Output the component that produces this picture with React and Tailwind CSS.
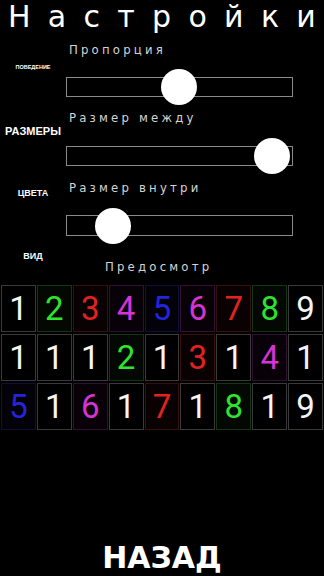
const GREEN = "#2fe32f"
const RED = "#e22222"
const MAGENTA = "#d633d6"
const BLUE = "#2424dc"
const WHITE = "#f4f4f4"

const cellStyles = {
  w: { color: WHITE, border: "border-[#3a3a3a]", bg: "bg-black" },
  g: { color: GREEN, border: "border-[#153415]", bg: "bg-[#030803]" },
  r: { color: RED, border: "border-[#361010]", bg: "bg-[#0a0202]" },
  m: { color: MAGENTA, border: "border-[#321032]", bg: "bg-[#080208]" },
  b: { color: BLUE, border: "border-[#101036]", bg: "bg-[#020208]" },
}

const rows = [
  [["1", "w"], ["2", "g"], ["3", "r"], ["4", "m"], ["5", "b"], ["6", "m"], ["7", "r"], ["8", "g"], ["9", "w"]],
  [["1", "w"], ["1", "w"], ["1", "w"], ["2", "g"], ["1", "w"], ["3", "r"], ["1", "w"], ["4", "m"], ["1", "w"]],
  [["5", "b"], ["1", "w"], ["6", "m"], ["1", "w"], ["7", "r"], ["1", "w"], ["8", "g"], ["1", "w"], ["9", "w"]],
]

const Slider = ({ thumbLeft, className }) => (
  <div className={`relative h-[20px] w-[227px] border border-[#8a8a8a] ${className}`}>
    <div
      className="absolute top-1/2 -translate-y-1/2 w-[36px] h-[36px] rounded-full bg-white"
      style={{ left: thumbLeft }}
    />
  </div>
)

const Label = ({ children, className }) => (
  <div
    className={`text-[13px] leading-[16px] tracking-[3.2px] text-[#d4d4d4] pl-[3px] whitespace-nowrap ${className}`}
    style={{ fontFamily: '"DejaVu Sans Condensed", "DejaVu Sans", sans-serif' }}
  >
    {children}
  </div>
)

const App = () => {
  return (
    <div
      className="w-[324px] h-[576px] bg-black text-white flex flex-col overflow-hidden"
      style={{ fontFamily: '"DejaVu Sans", sans-serif' }}
    >
      <h1 className="h-[36px] pl-[8px] text-[30px] leading-[34px] whitespace-nowrap">
        <span className="tracking-[17.3px]">Настройк</span>
        <span>и</span>
      </h1>

      <div className="flex">
        <div
          className="w-[66px] flex flex-col items-center font-bold"
          style={{ fontFamily: '"Liberation Sans", Arial, sans-serif' }}
        >
          <div className="mt-[27px] text-[5.5px] leading-[8px]">ПОВЕДЕНИЕ</div>
          <div className="mt-[54px] text-[11px] leading-[12px]">РАЗМЕРЫ</div>
          <div className="mt-[50px] text-[9px] leading-[12px]">ЦВЕТА</div>
          <div className="mt-[51px] text-[9px] leading-[12px]">ВИД</div>
        </div>

        <div className="flex flex-col">
          <Label className="mt-[6px]">Пропорция</Label>
          <Slider className="mt-[19px]" thumbLeft={94} />
          <Label className="mt-[13px]">Размер между</Label>
          <Slider className="mt-[20px]" thumbLeft={187} />
          <Label className="mt-[14px]">Размер внутри</Label>
          <Slider className="mt-[19px] h-[21px]" thumbLeft={28} />
          <Label className="mt-[23px] pl-[39px]">Предосмотр</Label>
        </div>
      </div>

      <div className="mt-[10px] grid grid-cols-9 gap-x-px gap-y-[2px] px-px">
        {rows.flat().map(([digit, kind], i) => {
          const s = cellStyles[kind]
          return (
            <div
              key={i}
              className={`h-[47px] flex items-center justify-center border ${s.border} ${s.bg} text-[33px]`}
              style={{ color: s.color, fontFamily: "Roboto, sans-serif" }}
            >
              {digit}
            </div>
          )
        })}
      </div>

      <div className="mt-auto pb-[1px] text-center text-[30px] leading-[34px] font-bold">
        НАЗАД
      </div>
    </div>
  )
}

export default App
